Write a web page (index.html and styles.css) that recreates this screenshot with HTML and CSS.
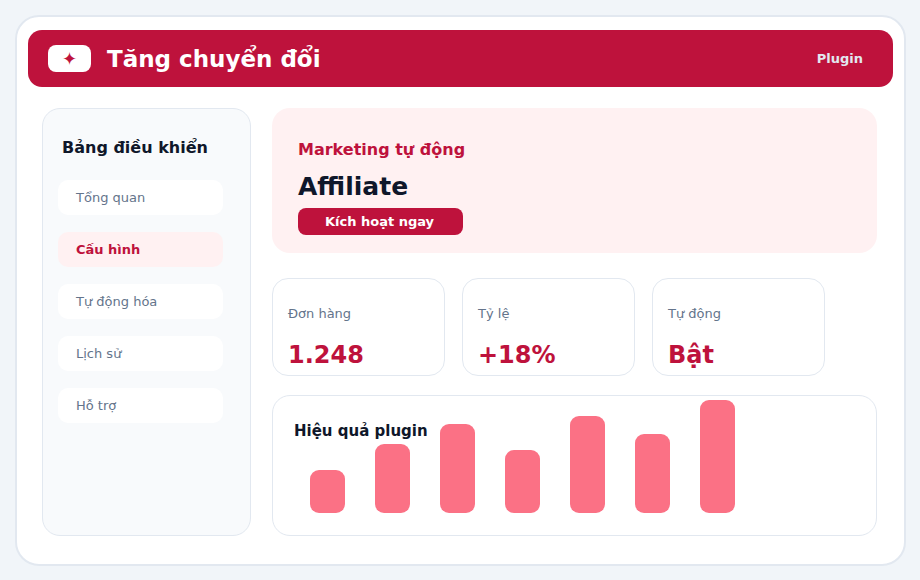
FILE: index.html
```html
<!DOCTYPE html>
<html lang="vi">
<head>
  <meta charset="UTF-8" />
  <title>Tăng chuyển đổi</title>
  <link rel="stylesheet" href="styles.css">
</head>
<body>
  <div class="app">
    <header class="topbar">
      <div class="logo">✦</div>
      <h1>Tăng chuyển đổi</h1>
      <div class="topbar-tag">Plugin</div>
    </header>

    <div class="layout">
      <aside class="sidebar">
        <h2>Bảng điều khiển</h2>
        <nav class="menu">
          <a href="#">Tổng quan</a>
          <a href="#" class="active">Cấu hình</a>
          <a href="#">Tự động hóa</a>
          <a href="#">Lịch sử</a>
          <a href="#">Hỗ trợ</a>
        </nav>
      </aside>

      <main class="content">
        <section class="hero">
          <div class="hero-label">Marketing tự động</div>
          <div class="hero-title">Affiliate</div>
          <button class="hero-btn">Kích hoạt ngay</button>
        </section>

        <section class="stats">
          <div class="stat">
            <div class="stat-label">Đơn hàng</div>
            <div class="stat-value">1.248</div>
          </div>
          <div class="stat">
            <div class="stat-label">Tỷ lệ</div>
            <div class="stat-value">+18%</div>
          </div>
          <div class="stat">
            <div class="stat-label">Tự động</div>
            <div class="stat-value">Bật</div>
          </div>
        </section>

        <section class="chart">
          <h3>Hiệu quả plugin</h3>
          <div class="bars">
            <div class="bar" style="height: 43px"></div>
            <div class="bar" style="height: 69px"></div>
            <div class="bar" style="height: 89px"></div>
            <div class="bar" style="height: 63px"></div>
            <div class="bar" style="height: 97px"></div>
            <div class="bar" style="height: 79px"></div>
            <div class="bar" style="height: 113px"></div>
          </div>
        </section>
      </main>
    </div>
  </div>
</body>
</html>
```

FILE: styles.css
```css
* {
  box-sizing: border-box;
  margin: 0;
  padding: 0;
}
body {
  width: 920px;
  height: 580px;
  overflow: hidden;
  padding: 15px;
  background: #f1f5f9;
  font-family: 'DejaVu Sans', sans-serif;
  color: #0f172a;
}

.app {
  width: 891px;
  height: 551px;
  padding: 13px 11px 0;
  background: #fff;
  border: 2px solid #e2e8f0;
  border-radius: 24px;
}

/* Top bar */
.topbar {
  display: flex;
  align-items: center;
  height: 57px;
  padding: 0 30px 0 20px;
  background: #be123c;
  border-radius: 14px;
  color: #fff;
}
.logo {
  display: flex;
  align-items: center;
  justify-content: center;
  width: 43px;
  height: 27px;
  margin-right: 16px;
  background: #fff;
  border-radius: 8px;
  color: #be123c;
  font-size: 18px;
}
.topbar h1 {
  flex: 1;
  font-size: 23px;
  font-weight: 700;
}
.topbar-tag {
  font-size: 13px;
  font-weight: 700;
  color: #e2e8f0;
}

/* Layout */
.layout {
  display: flex;
  gap: 21px;
  margin-top: 21px;
  padding: 0 16px 0 14px;
}

.sidebar {
  width: 209px;
  height: 428px;
  padding: 28px 15px 0;
  background: #f8fafc;
  border: 1px solid #e2e8f0;
  border-radius: 18px;
}
.sidebar h2 {
  margin: 0 0 22px 4px;
  font-size: 16px;
  line-height: 21px;
  font-weight: 700;
}
.menu {
  display: flex;
  flex-direction: column;
  gap: 17px;
  width: 165px;
}
.menu a {
  height: 35px;
  padding-left: 18px;
  background: #fff;
  border-radius: 10px;
  color: #64748b;
  font-size: 13px;
  line-height: 35px;
  text-decoration: none;
}
.menu a.active {
  background: #fff1f2;
  color: #be123c;
  font-weight: 700;
}

.content {
  flex: 1;
  display: flex;
  flex-direction: column;
}

/* Hero */
.hero {
  height: 145px;
  padding: 31px 26px 0;
  background: #fff1f2;
  border-radius: 18px;
}
.hero-label {
  font-size: 16px;
  line-height: 22px;
  font-weight: 700;
  color: #be123c;
}
.hero-title {
  margin-top: 9px;
  margin-bottom: 4px;
  font-size: 25px;
  line-height: 34px;
  font-weight: 700;
}
.hero-btn {
  display: block;
  width: 165px;
  height: 27px;
  padding-right: 2px;
  border: 0;
  border-radius: 8px;
  background: #be123c;
  color: #fff;
  font-family: inherit;
  font-size: 13px;
  font-weight: 700;
}

/* Stats */
.stats {
  display: flex;
  gap: 17px;
  margin-top: 25px;
}
.stat {
  width: 173px;
  height: 98px;
  padding: 26px 15px 0;
  border: 1px solid #e2e8f0;
  border-radius: 16px;
}
.stat-label {
  font-size: 13px;
  line-height: 17px;
  color: #64748b;
}
.stat-value {
  margin-top: 18px;
  font-size: 24px;
  line-height: 30px;
  font-weight: 700;
  color: #be123c;
}

/* Chart */
.chart {
  display: grid;
  height: 141px;
  margin-top: 19px;
  border: 1px solid #e2e8f0;
  border-radius: 18px;
}
.chart h3,
.bars {
  grid-area: 1 / 1;
}
.chart h3 {
  padding: 25px 0 0 21px;
  font-size: 15px;
  line-height: 20px;
  font-weight: 700;
}
.bars {
  display: flex;
  align-items: flex-end;
  gap: 30px;
  padding: 0 0 22px 37px;
}
.bar {
  width: 35px;
  background: #fb7185;
  border-radius: 9px;
}
```
